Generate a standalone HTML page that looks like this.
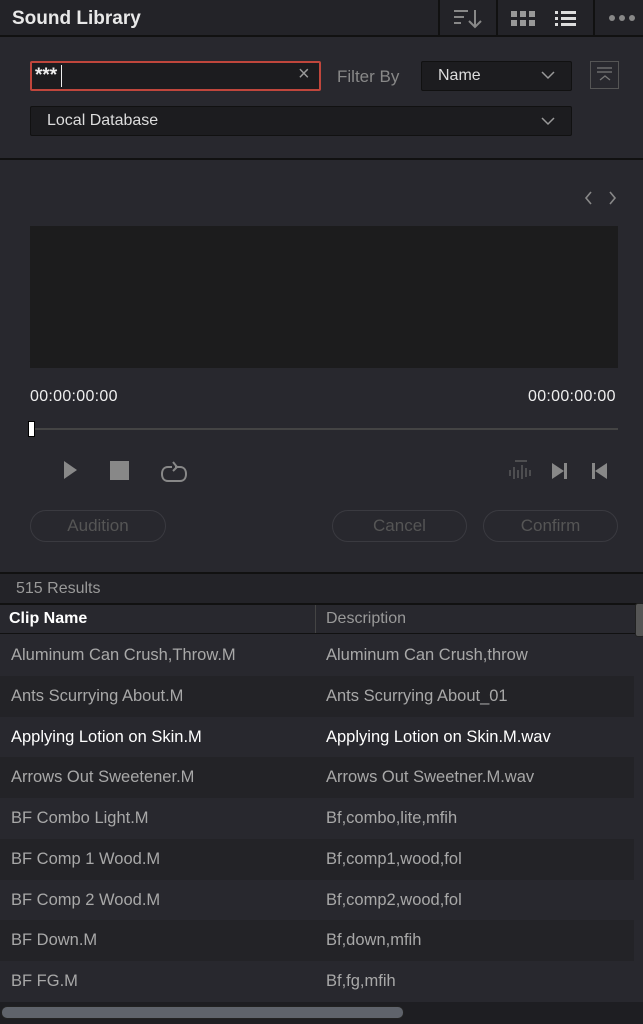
<!DOCTYPE html>
<html><head><style>
*{margin:0;padding:0;box-sizing:border-box}
body{width:643px;height:1024px;background:#28282e;font-family:"Liberation Sans",sans-serif;position:relative;overflow:hidden;color:#ccc}
.a{position:absolute}
.hdr{left:0;top:0;width:643px;height:37px;background:#232328;border-bottom:2px solid #111}
.sep{top:0;width:2px;height:37px;background:#111}
.row{left:0;width:634px;height:41px;font-size:16.5px;line-height:41px;color:#a8a8a8}
.row span{position:absolute;left:11px}
.row span+span{left:326px}
.btn{height:32px;border:1px solid #3a3a40;border-radius:16px;color:#555;font-size:17px;text-align:center;line-height:30px}
</style></head><body>
<div class="a hdr"></div>
<div class="a" style="left:12px;top:8px;font-size:19px;font-weight:bold;color:#e8e8e8">Sound Library</div>
<div class="a sep" style="left:438px"></div>
<div class="a sep" style="left:496px"></div>
<div class="a sep" style="left:593px"></div>
<svg class="a" style="left:452px;top:8px" width="32" height="22" fill="none" stroke="#888" stroke-width="2"><path d="M2 3h14M2 9h10M2 15h7M23 2v17M17 13l6 6 6-6"/></svg>
<svg class="a" style="left:510px;top:10px" width="26" height="18" fill="#999"><rect x="1" y="1" width="6" height="6"/><rect x="10" y="1" width="6" height="6"/><rect x="19" y="1" width="6" height="6"/><rect x="1" y="10" width="6" height="6"/><rect x="10" y="10" width="6" height="6"/><rect x="19" y="10" width="6" height="6"/></svg>
<svg class="a" style="left:554px;top:10px" width="24" height="18" fill="#ddd"><rect x="1" y="1" width="3" height="3"/><rect x="7" y="1" width="15" height="3"/><rect x="1" y="7" width="3" height="3"/><rect x="7" y="7" width="15" height="3"/><rect x="1" y="13" width="3" height="3"/><rect x="7" y="13" width="15" height="3"/></svg>
<svg class="a" style="left:608px;top:14px" width="30" height="8" fill="#888"><circle cx="4" cy="4" r="3"/><circle cx="14" cy="4" r="3"/><circle cx="24" cy="4" r="3"/></svg>

<div class="a" style="left:30px;top:61px;width:291px;height:30px;background:#1c1c1f;border:2px solid #c0463c;border-radius:2px"></div>
<div class="a" style="left:35px;top:65px;font-size:19px;color:#eee;font-weight:bold">***</div>
<div class="a" style="left:61px;top:65px;width:1px;height:22px;background:#eee"></div>
<div class="a" style="left:298px;top:63px;font-size:20px;color:#999">×</div>
<div class="a" style="left:337px;top:67px;font-size:17px;color:#888">Filter By</div>
<div class="a" style="left:421px;top:61px;width:151px;height:30px;background:#1c1c1f;border:1px solid #111;border-radius:2px"></div>
<div class="a" style="left:438px;top:67px;font-size:16px;color:#ddd">Name</div>
<svg class="a" style="left:540px;top:70px" width="16" height="10" fill="none" stroke="#999" stroke-width="1.5"><path d="M2 2l6 6 6-6"/></svg>
<div class="a" style="left:590px;top:61px;width:29px;height:28px;border:1px solid #555"></div>
<svg class="a" style="left:594px;top:65px" width="22" height="20" fill="none" stroke="#777" stroke-width="1.3"><path d="M3 3h15M3 7h15M6 15l5-4 5 4"/></svg>
<div class="a" style="left:30px;top:106px;width:542px;height:30px;background:#1c1c1f;border:1px solid #111;border-radius:2px"></div>
<div class="a" style="left:47px;top:112px;font-size:16px;color:#ddd">Local Database</div>
<svg class="a" style="left:540px;top:116px" width="16" height="10" fill="none" stroke="#999" stroke-width="1.5"><path d="M2 2l6 6 6-6"/></svg>

<div class="a" style="left:0;top:158px;width:643px;height:2px;background:#111"></div>
<svg class="a" style="left:582px;top:190px" width="40" height="16" fill="none" stroke="#888" stroke-width="1.6"><path d="M9 2l-5 6 5 6M28 2l5 6-5 6"/></svg>
<div class="a" style="left:30px;top:226px;width:588px;height:142px;background:#1c1c1d"></div>
<div class="a" style="left:30px;top:388px;font-size:16px;color:#eee;letter-spacing:0.3px">00:00:00:00</div>
<div class="a" style="left:528px;top:388px;font-size:16px;color:#eee;letter-spacing:0.3px">00:00:00:00</div>
<div class="a" style="left:30px;top:428px;width:588px;height:2px;background:#444"></div>
<div class="a" style="left:28px;top:421px;width:7px;height:16px;background:#fff;border:1px solid #000"></div>
<svg class="a" style="left:60px;top:458px" width="140" height="28"><path d="M4 3v18l13-9z" fill="#888"/><rect x="50" y="3" width="19" height="19" fill="#888"/><path d="M112 9h-4c-4 0-6 3-6 7s2 7 6 7h12c4 0 6-3 6-7s-2-7-6-7h-5M113 4l4 5-4 4" fill="none" stroke="#888" stroke-width="2"/></svg>
<svg class="a" style="left:507px;top:458px" width="105" height="28" fill="#888"><g stroke="#666" stroke-width="1.2"><path d="M3 12v6M7 9v12M11 12v8M15 7v14M19 10v9M23 12v6M8 3h12"/></g><path d="M45 5v16l12-8z"/><rect x="57" y="5" width="3" height="16"/><rect x="85" y="5" width="3" height="16"/><path d="M100 5v16l-12-8z"/></svg>
<div class="a btn" style="left:30px;top:510px;width:136px">Audition</div>
<div class="a btn" style="left:332px;top:510px;width:135px">Cancel</div>
<div class="a btn" style="left:483px;top:510px;width:135px">Confirm</div>

<div class="a" style="left:0;top:572px;width:643px;height:2px;background:#111"></div>
<div class="a" style="left:0;top:574px;width:643px;height:29px;background:#232328"></div>
<div class="a" style="left:16px;top:580px;font-size:16px;color:#999">515 Results</div>
<div class="a" style="left:0;top:603px;width:643px;height:2px;background:#111"></div>
<div class="a" style="left:0;top:605px;width:643px;height:29px;background:#28282e;border-bottom:1px solid #111"></div>
<div class="a" style="left:9px;top:610px;font-size:16px;font-weight:bold;color:#fff">Clip Name</div>
<div class="a" style="left:315px;top:605px;width:1px;height:28px;background:#444"></div>
<div class="a" style="left:326px;top:610px;font-size:16px;color:#999">Description</div>
<div class="a" style="left:635px;top:603px;width:10px;height:34px;background:#555;border:1px solid #222;border-radius:3px"></div>

<div class="a row" style="top:635px;background:#28282e"><span>Aluminum Can Crush,Throw.M</span><span>Aluminum Can Crush,throw</span></div>
<div class="a row" style="top:676px;background:#232327"><span>Ants Scurrying About.M</span><span>Ants Scurrying About_01</span></div>
<div class="a row" style="top:717px;background:#28282e;color:#fff"><span>Applying Lotion on Skin.M</span><span>Applying Lotion on Skin.M.wav</span></div>
<div class="a row" style="top:757px;background:#232327"><span>Arrows Out Sweetener.M</span><span>Arrows Out Sweetner.M.wav</span></div>
<div class="a row" style="top:798px;background:#28282e"><span>BF Combo Light.M</span><span>Bf,combo,lite,mfih</span></div>
<div class="a row" style="top:839px;background:#232327"><span>BF Comp 1 Wood.M</span><span>Bf,comp1,wood,fol</span></div>
<div class="a row" style="top:880px;background:#28282e"><span>BF Comp 2 Wood.M</span><span>Bf,comp2,wood,fol</span></div>
<div class="a row" style="top:920px;background:#232327"><span>BF Down.M</span><span>Bf,down,mfih</span></div>
<div class="a row" style="top:961px;background:#28282e"><span>BF FG.M</span><span>Bf,fg,mfih</span></div>
<div class="a" style="left:0;top:1002px;width:643px;height:22px;background:#1e1e22"></div>
<div class="a" style="left:1px;top:1006px;width:403px;height:13px;background:#5f636b;border:1px solid #222;border-radius:6px"></div>
</body></html>
